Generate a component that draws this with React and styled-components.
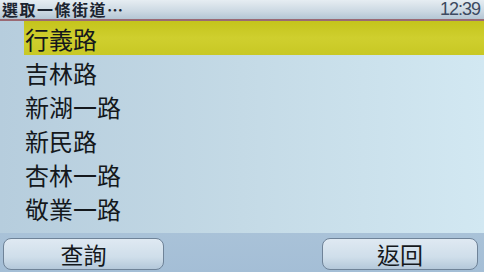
import styled, { createGlobalStyle } from 'styled-components';

const Global = createGlobalStyle`
  html, body { margin: 0; padding: 0; }
  body {
    width: 484px;
    height: 272px;
    overflow: hidden;
    font-family: "Noto Sans CJK TC", "Liberation Serif", serif;
  }
`;

const Screen = styled.div`
  width: 484px;
  height: 272px;
  display: flex;
  flex-direction: column;
  background: linear-gradient(90deg, #b6cddd 0%, #c4dae6 50%, #d2e8f2 100%);
`;

const TitleBar = styled.div`
  height: 19px;
  display: flex;
  align-items: center;
  justify-content: space-between;
  padding: 0 4px 0 2px;
  background: linear-gradient(180deg, #e6edf2 0%, #cbd8e2 60%, #b4c6d4 100%);
  border-bottom: 2px solid #9a6a74;
`;

const Title = styled.div`
  font-family: "Noto Sans CJK TC", sans-serif;
  font-size: 16px;
  font-weight: 700;
  color: #1c2430;
  letter-spacing: 1.5px;
  line-height: 19px;
  height: 19px;
`;

const Clock = styled.div`
  font-family: "Liberation Sans", Arial, sans-serif;
  font-size: 18px;
  color: #3c4a60;
  letter-spacing: -1px;
  line-height: 19px;
  height: 19px;
`;

const List = styled.div`
  flex: 1;
  display: flex;
  flex-direction: column;
  padding-left: 24px;
`;

const Row = styled.div`
  height: 34px;
  display: flex;
  align-items: center;
  padding-left: 1px;
  font-family: "Noto Sans CJK TC", serif;
  font-size: 24px;
  color: #14181c;
  background: ${p => (p.$active ? 'linear-gradient(180deg, #c4c41c 0%, #cfcf2e 50%, #c8c824 100%)' : 'transparent')};
`;

const BottomBar = styled.div`
  height: 39px;
  display: flex;
  align-items: center;
  justify-content: space-between;
  padding: 2px 6px 0 3px;
  box-sizing: border-box;
  background: linear-gradient(180deg, #a9c2d8 0%, #a4bed6 100%);
`;

const Button = styled.div`
  width: ${p => p.$w}px;
  height: 32px;
  box-sizing: border-box;
  border: 1px solid #6f8398;
  border-radius: 8px;
  display: flex;
  align-items: center;
  justify-content: center;
  background: linear-gradient(180deg, #dfe9f2 0%, #cfdeea 60%, #b4c8da 100%);
  font-family: "Noto Sans CJK TC", serif;
  font-size: 23px;
  color: #14181c;
`;

const streets = ['行義路', '吉林路', '新湖一路', '新民路', '杏林一路', '敬業一路'];

export default function App() {
  return (
    <Screen>
      <Global />
      <TitleBar>
        <Title>選取一條街道…</Title>
        <Clock>12:39</Clock>
      </TitleBar>
      <List>
        {streets.map((s, i) => (
          <Row key={s} $active={i === 0}>{s}</Row>
        ))}
      </List>
      <BottomBar>
        <Button $w={161}>查詢</Button>
        <Button $w={156}>返回</Button>
      </BottomBar>
    </Screen>
  );
}
